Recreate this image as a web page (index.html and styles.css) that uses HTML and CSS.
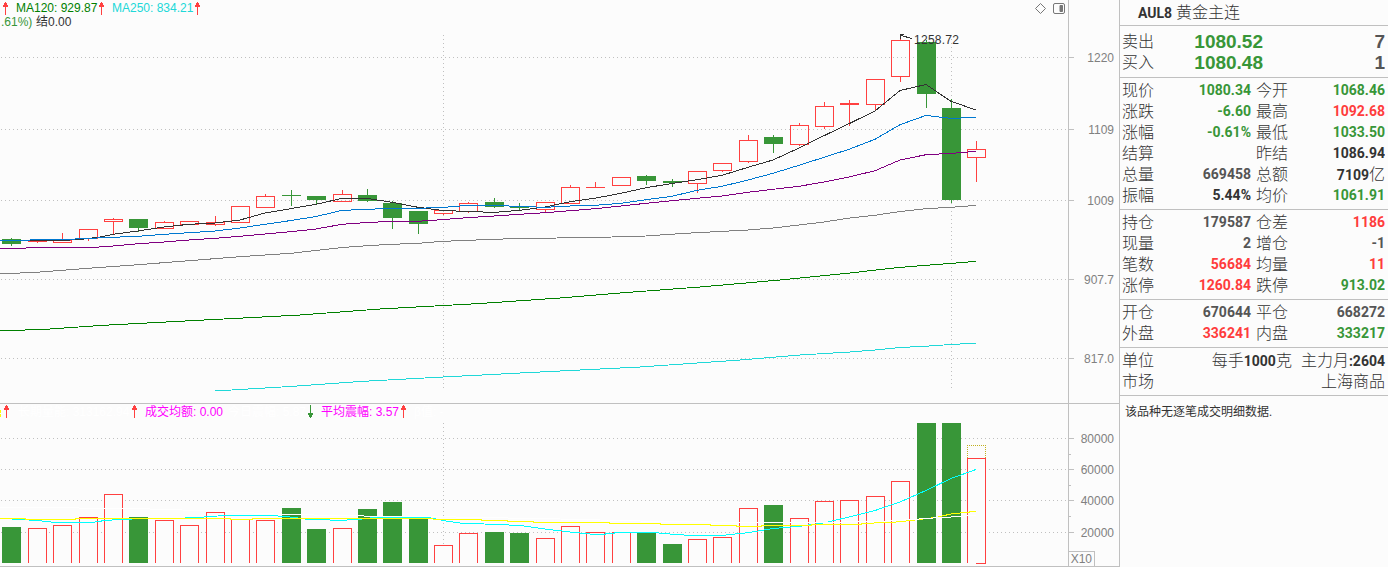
FILE: index.html
```html
<!DOCTYPE html>
<html lang="zh-CN">
<head>
    <meta charset="UTF-8">
    <meta name="viewport" content="width=device-width, initial-scale=1.0">
    <title>AUL8 黄金主连</title>
    <link rel="stylesheet" href="styles.css">
</head>
<body>
    <div class="terminal">
        <div class="charts">
            <div class="pane price-pane">
                <svg id="priceChart" width="1119" height="403"></svg>
                <span class="tag ma120" style="left: 16px">MA120: 929.87</span>
                <span class="tag ma250" style="left: 112px">MA250: 834.21</span>
                <span class="tag row2 down" style="left: 1px">.61%)</span>
                <span class="tag row2" style="left: 36px">结0.00</span>
            </div>
            <div class="pane volume-pane">
                <svg id="volumeChart" width="1119" height="162"></svg>
                <span class="tag ghost" style="left: 18px">长期量能: 313162.94</span>
                <span class="tag magenta" style="left: 145px">成交均额: 0.00</span>
                <span class="tag ghost" style="left: 228px">今日震幅: 5.87</span>
                <span class="tag magenta" style="left: 321px">平均震幅: 3.57</span>
                <span class="tag ghost" style="left: 414px">β值: -</span>
            </div>
        </div>
        <div class="quote">
            <div class="title"><b>AUL8</b> 黄金主连</div>
            <div class="section orders">
                <div class="order"><span>卖出</span><b class="down">1080.52</b><b class="gray">7</b></div>
                <div class="order"><span>买入</span><b class="down">1080.48</b><b class="gray">1</b></div>
            </div>
            <div class="section">
                <div class="line"><span>现价</span><b class="down">1080.34</b><span>今开</span><b class="down">1068.46</b></div>
                <div class="line"><span>涨跌</span><b class="down">-6.60</b><span>最高</span><b class="up">1092.68</b></div>
                <div class="line"><span>涨幅</span><b class="down">-0.61%</b><span>最低</span><b class="down">1033.50</b></div>
                <div class="line"><span>结算</span><b></b><span>昨结</span><b>1086.94</b></div>
                <div class="line"><span>总量</span><b class="gray">669458</b><span>总额</span><b>7109<i>亿</i></b></div>
                <div class="line"><span>振幅</span><b>5.44%</b><span>均价</span><b class="down">1061.91</b></div>
            </div>
            <div class="section">
                <div class="line"><span>持仓</span><b class="gray">179587</b><span>仓差</span><b class="up">1186</b></div>
                <div class="line"><span>现量</span><b class="gray">2</b><span>增仓</span><b class="gray">-1</b></div>
                <div class="line"><span>笔数</span><b class="up">56684</b><span>均量</span><b class="up">11</b></div>
                <div class="line"><span>涨停</span><b class="up">1260.84</b><span>跌停</span><b class="down">913.02</b></div>
            </div>
            <div class="section">
                <div class="line"><span>开仓</span><b class="gray">670644</b><span>平仓</span><b class="gray">668272</b></div>
                <div class="line"><span>外盘</span><b class="up">336241</b><span>内盘</span><b class="down">333217</b></div>
            </div>
            <div class="section">
                <div class="info"><span>单位</span><b><i>每手</i>1000<i>克</i><i class="gap">主力月</i>:2604</b></div>
                <div class="info"><span>市场</span><b><i>上海商品</i></b></div>
            </div>
            <div class="notice">该品种无逐笔成交明细数据.</div>
        </div>
    </div>
    <script src="chart.js"></script>
</body>
</html>
```
FILE: styles.css
```css
body { margin: 0; background: #fcfcfc; color: #333; font-family: "Liberation Sans", "Noto Sans CJK SC", sans-serif; overflow: hidden; }
.terminal { display: flex; width: 1388px; height: 567px; }
.charts { width: 1119px; display: flex; flex-direction: column; }
.pane { position: relative; border-bottom: 1px solid #c0c0c0; overflow: hidden; }
.price-pane { height: 403px; }
.volume-pane { height: 162px; }
svg { display: block; shape-rendering: crispEdges; }

/* indicator values printed over the plots */
.tag { position: absolute; top: 1px; font-size: 12px; line-height: 14px; white-space: pre; }
.tag.row2 { top: 15px; }
.volume-pane .tag { top: 1px; }
.ma120 { color: #008000; }
.ma250 { color: #20d8d8; }
.magenta { color: #f0f; }
.ghost { color: #fff; }

.up { color: #ff3c3c; }
.down { color: #389638; }
.gray { color: #555; }

.grid { stroke: #c0c0c0; stroke-dasharray: 1 3; }
.axis { stroke: #c0c0c0; }
.scale { font-size: 12px; fill: #808080; text-anchor: end; }
.candle-up { fill: none; stroke: #ff4040; }
.candle-down { fill: #389638; }
.wick-up { stroke: #ff4040; }
.wick-down { stroke: #389638; }
.ma { fill: none; stroke-width: 1; }
.peak { font-size: 12px; fill: #333; }

/* quote panel */
.quote { box-sizing: border-box; width: 269px; border-left: 1px solid #c0c0c0; font-family: Roboto, "Noto Sans CJK SC", sans-serif; font-size: 16px; font-weight: 300; }
.quote b { font-size: 14px; font-weight: 700; }
.quote i { font-size: 16px; font-weight: 300; font-style: normal; }
.title { height: 25px; line-height: 25px; padding-left: 18px; border-bottom: 1px solid #c0c0c0; }
.section { padding: 2px 3px 3px 2px; border-bottom: 1px solid #c0c0c0; }
.orders { padding-top: 5px; padding-bottom: 4px; }
.line, .order { display: grid; height: 21px; line-height: 21px; overflow: hidden; }
.line { grid-template-columns: 34px 95px 5px 34px 1fr; }
.line span:nth-of-type(2) { grid-column: 4; }
.line b, .order b { text-align: right; }
.order { grid-template-columns: 34px 107px 1fr; }
.order b { font-family: "Liberation Sans", sans-serif; font-size: 19px; }
.info { display: flex; justify-content: space-between; height: 21px; line-height: 21px; }
.gap { margin-left: 9px; }
.notice { padding: 8px 5px; font-size: 12px; line-height: 16px; font-weight: 400; }
```
FILE: chart.js
```js
// left, body top, body bottom, high, low, direction, volume top
const bars = [
    [2, 239, 244, 238, 246, 0, 527],
    [28, 241, 242, 239, 243, 1, 528],
    [53, 240, 243, 233, 243, 1, 525],
    [79, 229, 239, 229, 241, 1, 517],
    [104, 219, 222, 218, 234, 1, 494],
    [129, 219, 228, 219, 232, 0, 517],
    [155, 222, 229, 221, 229, 1, 520],
    [180, 221, 225, 221, 225, 1, 525],
    [206, 222, 225, 216, 226, 1, 512],
    [231, 206, 223, 206, 223, 1, 519],
    [256, 196, 208, 194, 208, 1, 520],
    [282, 195, 196, 190, 206, 0, 508],
    [307, 196, 200, 196, 204, 0, 529],
    [333, 194, 202, 190, 202, 1, 528],
    [358, 195, 201, 189, 202, 0, 509],
    [383, 203, 218, 201, 229, 0, 502],
    [409, 211, 224, 211, 234, 0, 518],
    [434, 210, 214, 210, 215, 1, 545],
    [459, 203, 212, 202, 213, 1, 533],
    [485, 202, 207, 198, 208, 0, 532],
    [510, 206, 208, 203, 210, 0, 533],
    [536, 202, 210, 202, 212, 1, 538],
    [561, 187, 204, 185, 204, 1, 526],
    [586, 187, 188, 182, 188, 1, 532],
    [612, 177, 186, 177, 186, 1, 532],
    [637, 176, 181, 175, 185, 0, 532],
    [663, 181, 183, 179, 187, 0, 544],
    [688, 171, 184, 171, 193, 1, 539],
    [713, 163, 171, 163, 172, 1, 537],
    [739, 140, 162, 135, 163, 1, 508],
    [764, 137, 144, 135, 153, 0, 505],
    [790, 125, 145, 123, 146, 1, 518],
    [815, 106, 127, 102, 129, 1, 501],
    [840, 103, 105, 100, 126, 1, 500],
    [866, 79, 105, 79, 111, 1, 496],
    [891, 40, 77, 37, 82, 1, 481],
    [917, 42, 94, 40, 108, 0, 423],
    [942, 108, 200, 99, 203, 0, 423],
    [967, 149, 158, 141, 182, 1, 458]
];

const ma = [
    ['#808080', '0,274 40,272 88,268.3 138,264.7 189,260.7 240,256.7 291,253.3 342,247.5 367,245.7 392,244.3 418,243.3 443,241.3 494,239.3 519,238.5 595,237.5 646,236 685,233.3 748,230 773,228 799,225 824,222 850,218 875,215.3 900,211.5 926,208.7 951,207.3 976,205.4'],
    ['#008000', '0,331 50,329 100,325.5 214,319.5 300,315 380,309 480,303.5 560,298 620,293 700,287 780,280 850,273 885,269 900,267.4 926,265.3 951,263.4 976,261.4'],
    ['#20d8d8', '215,391 290,386.5 360,381.5 443,377 540,372 640,367 740,360 800,355 850,352 875,350 900,347.5 926,346.2 951,344.5 976,343.2'],
    ['#800080', '0,248.3 22,248.2 37,247.5 95,247.3 113,246 138,243.7 164,242 189,240 215,238.3 240,236.3 265,234 291,231.7 316,229 342,224.3 367,222.5 392,221.4 418,221.3 443,219.6 468,217.6 494,216 519,214.3 545,212.7 570,210.7 595,208.7 621,206 646,203.3 672,200.7 697,198.3 722,196 748,192.3 773,189.3 799,186.3 824,182 849,177 875,170.7 900,160 926,154.7 951,153.4 976,151.3'],
    ['#333333', '0,240.4 62,240.4 80,239.5 100,237 113,234.3 138,231 164,227 189,224.3 215,223 240,220 265,213 291,208.6 316,204.3 342,198.4 367,198.4 392,202.3 418,207.3 443,210.5 468,211.5 494,212.4 519,210.4 545,207 570,201.7 595,198.2 621,193.3 646,187.7 672,183.5 697,179.7 722,175.3 748,167.3 773,160 799,148 824,135.7 849,123.7 875,111 900,90.5 926,84.5 951,101.3 976,110'],
    ['#0078d0', '0,240.4 62,239.6 88,238.4 113,237.3 138,236.3 164,234.3 189,232.7 215,231 240,228 265,224.3 291,220.5 316,216.5 342,210.4 367,209.3 392,208.4 418,208.3 443,207.4 468,205.4 494,205.4 519,206.4 545,207.3 570,206 595,205.3 621,203.3 646,199.7 672,196.3 697,190.3 722,186.3 748,180 773,173.3 799,165.3 824,157.3 849,149.3 875,139.3 900,124.7 926,115.4 951,118.4 976,117.4']
];

const volMa = [
    ['#00ffff', '0,518.4 20,519.4 37,520.5 55,522.4 92,522.4 105,520.5 120,519.4 151,518.4 177,518.3 200,517.4 209,516.5 228,515.4 271,515.4 290,517 305,519 340,520.4 360,519.3 375,517.4 427,517.4 433,518.4 443,520.5 460,523 494,524.4 520,525.5 545,529 570,532 590,534 602,534.4 620,532.4 652,532.4 670,534 690,535.4 722,535.4 748,532.7 773,528.5 799,526.4 812,524.5 825,522.7 849,517 875,510.5 900,502 926,490.5 951,478.5 976,469.5'],
    ['#ffff00', '0,518.4 25,518.4 26,519.4 75,519.4 76,518.4 230,518.4 231,519.4 252,519.4 253,518.4 432,518.4 434,519.4 481,519.4 482,520.4 507,520.4 508,521.4 533,521.4 534,522.4 609,522.4 610,523.4 660,523.4 661,524.4 710,524.4 711,525.4 736,525.4 737,526.4 761,526.4 762,525.4 811,525.4 812,524.4 861,524.4 862,523.4 892,522.4 912,520.4 936,517.4 951,514 976,511.3'],
    ['#ffffff', '0,507.4 130,508.4 215,511 234,512 282,514.4 340,515.5 383,516.4 440,516.7 560,519 640,521 740,522.4 820,522.4 880,521.4 915,519.4 926,518.4 945,517.4 976,515.3']
];

function line(x1, y1, x2, y2, cls) {
    return `<line x1="${x1}" y1="${y1}" x2="${x2}" y2="${y2}" class="${cls}"/>`;
}

function curves(list) {
    return list.map(([color, points]) => `<polyline class="ma" stroke="${color}" points="${points}"/>`).join('');
}

function arrow(x, y, up) {
    const flip = up ? '' : ` rotate(180 2.5 6.5)`;
    return `<path transform="translate(${x - 2} ${y})${flip}" fill="${up ? '#ff4040' : '#389638'}" d="M2 0h1v1h1v2h1v2h-2v8h-1v-8h-2v-2h1v-2h1z"/>`;
}

function drawPrice() {
    let s = '';
    [57, 129, 200, 279, 358].forEach(y => {
        s += line(1, y + 0.5, 1067, y + 0.5, 'grid');
        s += line(1069, y + 0.5, 1074, y + 0.5, 'axis');
    });
    s += line(443.5, 35, 443.5, 390, 'grid') + line(951.5, 35, 951.5, 390, 'grid');
    s += line(1068.5, 0, 1068.5, 403, 'axis');
    [[57, '1220'], [129, '1109'], [200, '1009'], [279, '907.7'], [358, '817.0']].forEach(([y, t]) => {
        s += `<text x="1114" y="${y + 5}" class="scale">${t}</text>`;
    });
    bars.forEach(([x, top, bottom, high, low, up]) => {
        const c = x + 9.5;
        const wick = up ? 'wick-up' : 'wick-down';
        if (high < top) s += line(c, high, c, top, wick);
        if (low > bottom) s += line(c, bottom, c, low, wick);
        if (bottom - top < 2) s += line(x, top + 0.5, x + 19, top + 0.5, wick);
        else if (up) s += `<rect x="${x + 0.5}" y="${top + 0.5}" width="18" height="${bottom - top - 1}" class="candle-up"/>`;
        else s += `<rect x="${x}" y="${top}" width="19" height="${bottom - top}" class="candle-down"/>`;
    });
    s += curves(ma);
    s += arrow(5, 2, true) + arrow(101, 2, true) + arrow(197, 2, true);
    // highest price marker
    s += '<path d="M904 34.5h-3.500v4M901 35.500l11 3" fill="none" stroke="#333"/><text x="914" y="44" class="peak" textLength="45">1258.72</text>';
    // toolbar icons
    s += '<g fill="none" stroke="#777" shape-rendering="auto"><path d="M1035.500 8.500l5-5 5 5-5 5z"/><rect x="1053.500" y="3.500" width="11" height="10" rx="1.500"/><path d="M1060 5.500h2.500v6h-2.500z" fill="#777"/></g>';
    document.getElementById('priceChart').innerHTML = s;
}

function drawVolume() {
    let s = '';
    [438, 469, 500, 532].forEach((y, i) => {
        s += line(1, y + 0.5, 1067, y + 0.5, 'grid');
        s += line(1069, y + 0.5, 1074, y + 0.5, 'axis');
        s += `<text x="1114" y="${y + 5}" class="scale">${80000 - i * 20000}</text>`;
    });
    [454, 485, 516].forEach(y => { s += line(1069, y + 0.5, 1071, y + 0.5, 'axis'); });
    s += line(443.5, 423, 443.5, 545, 'grid');
    s += line(1068.5, 404, 1068.5, 566, 'axis');
    s += '<path d="M1069 551.500h25.500v14.500" class="axis" fill="none"/><text x="1092" y="563" class="scale">X10</text>';
    bars.forEach(([x, , , , , up, top]) => {
        if (up) s += `<path d="M${x + 0.5} 563V${top + 0.5}H${x + 18.5}V563" fill="#fcfcfc" stroke="#ff4040"/>`;
        else s += `<rect x="${x}" y="${top}" width="19" height="${563 - top}" class="candle-down"/>`;
    });
    s += '<path d="M976 563.500h10" stroke="#ff4040"/><path d="M967.500 458v-12.500h18v12.500" fill="none" stroke="#c0b020" stroke-dasharray="1 1"/>';
    s += curves(volMa);
    s += '<rect x="0" y="410" width="1" height="3" fill="#ff0"/><rect x="0" y="414" width="1" height="3" fill="#ff0"/>';
    s += arrow(6, 405, true) + arrow(134, 405, true) + arrow(310, 405, false) + arrow(403, 405, true);
    document.getElementById('volumeChart').innerHTML = `<g transform="translate(0 -404)">${s}</g>`;
}

drawPrice();
drawVolume();
```
